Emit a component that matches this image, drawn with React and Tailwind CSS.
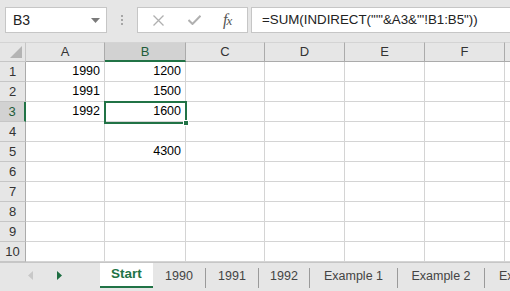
import React from 'react';

const cols = ["A", "B", "C", "D", "E", "F", "G"];
const data = {
  1: { A: "1990", B: "1200" },
  2: { A: "1991", B: "1500" },
  3: { A: "1992", B: "1600" },
  5: { B: "4300" },
};
const tabs = [
  { name: "1990", w: "w-[52px]" },
  { name: "1991", w: "w-[53px]" },
  { name: "1992", w: "w-[51px]" },
  { name: "Example 1", w: "w-[88px]" },
  { name: "Example 2", w: "w-[87px]" },
  { name: "Example 3", w: "w-[88px]" },
];

function FormulaBar() {
  return (
    <div className="h-[42px] bg-[#e6e6e6] flex items-start pt-[7px] pl-[5px] gap-0">
      <div className="w-[102px] h-[26px] shrink-0 bg-white border border-[#c6c6c6] flex items-center justify-between pl-[7px] pr-[6px]">
        <span className="text-[14px] text-[#222]">B3</span>
        <svg width="9" height="5" viewBox="0 0 9 5"><path d="M0 0 L9 0 L4.5 5 Z" fill="#7a7a7a" /></svg>
      </div>
      <div className="w-[30px] h-[26px] shrink-0 flex flex-col items-center justify-center gap-[2px]">
        <div className="w-[2px] h-[2px] bg-[#a6a6a6]" />
        <div className="w-[2px] h-[2px] bg-[#a6a6a6]" />
        <div className="w-[2px] h-[2px] bg-[#a6a6a6]" />
      </div>
      <div className="w-[111px] h-[26px] shrink-0 bg-white border border-[#c6c6c6] flex items-center">
        <svg className="ml-[15px]" width="11" height="11" viewBox="0 0 11 11"><path d="M0.5 0.5 L10.5 10.5 M10.5 0.5 L0.5 10.5" stroke="#b0b0b0" strokeWidth="1.3" /></svg>
        <svg className="ml-[24px]" width="13" height="10" viewBox="0 0 13 10"><path d="M0.5 5 L4.5 9 L12.5 0.8" stroke="#b0b0b0" strokeWidth="2" fill="none" /></svg>
        <span className="ml-[22px] text-[16px] italic text-[#555] font-['Liberation_Serif',serif] tracking-[-1px]">f<span className="text-[13px]">x</span></span>
      </div>
      <div className="ml-[3px] flex-1 min-w-0 h-[26px] bg-white border border-[#c6c6c6] border-r-0 flex items-center pl-[10px] overflow-hidden">
        <span className="text-[13.3px] text-[#222] whitespace-nowrap">=SUM(INDIRECT("'"&amp;A3&amp;"'!B1:B5"))</span>
      </div>
    </div>
  );
}

function Grid() {
  return (
    <div className="relative h-[220px] overflow-hidden bg-white">
      <div className="grid grid-cols-[26px_79px_81px_79px_80px_80px_80px_80px] auto-rows-[20px] w-[585px]">
        <div className="relative bg-[#e6e6e6] border-r border-b border-[#c6c6c6] border-t border-t-[#d4d4d4]">
          <svg className="absolute right-[3px] bottom-[3px]" width="12" height="12" viewBox="0 0 12 12"><path d="M12 0 L12 12 L0 12 Z" fill="#b4b4b4" /></svg>
        </div>
        {cols.map((c) =>
          c === "B" ? (
            <div key={c} className="bg-[#d2d2d2] border-r border-[#ababab] border-t border-t-[#d4d4d4] border-b-2 border-b-[#217346] flex items-center justify-center text-[13px] text-[#1f5c39]">{c}</div>
          ) : (
            <div key={c} className="bg-[#e6e6e6] border-r border-[#ababab] border-b border-b-[#ababab] border-t border-t-[#d4d4d4] flex items-center justify-center text-[13px] text-[#333]">{c === "G" ? "" : c}</div>
          )
        )}
        {[1, 2, 3, 4, 5, 6, 7, 8, 9, 10].map((r) => (
          <React.Fragment key={r}>
            {r === 3 ? (
              <div className="bg-[#d2d2d2] border-r-2 border-r-[#217346] border-b border-[#c6c6c6] flex items-center justify-center text-[13px] text-[#1f5c39]">{r}</div>
            ) : (
              <div className="bg-[#e6e6e6] border-r border-[#ababab] border-b border-b-[#c6c6c6] flex items-center justify-center text-[13px] text-[#333]">{r}</div>
            )}
            {cols.map((c) => (
              <div key={c} className="border-r border-b border-[#d4d4d4] flex items-center justify-end pr-[4px] text-[12.5px] text-black">
                {data[r] && data[r][c]}
              </div>
            ))}
          </React.Fragment>
        ))}
      </div>
      <div className="absolute left-[104px] top-[59px] w-[83px] h-[23px] border-2 border-[#217346]" />
      <div className="absolute left-[183px] top-[78px] w-[6px] h-[6px] bg-[#217346] border border-white" />
    </div>
  );
}

function SheetTabs() {
  return (
    <div className="h-[29px] bg-[#e6e6e6] border-t border-[#c6c6c6] flex items-start overflow-hidden">
      <div className="w-[100px] h-[25px] shrink-0 flex items-center">
        <svg className="ml-[28px]" width="5" height="9" viewBox="0 0 5 9"><path d="M5 0 L5 9 L0 4.5 Z" fill="#c8c8c8" /></svg>
        <svg className="ml-[24px]" width="5" height="9" viewBox="0 0 5 9"><path d="M0 0 L0 9 L5 4.5 Z" fill="#1e6e42" /></svg>
      </div>
      <div className="w-[53px] h-[25px] shrink-0 bg-white border-b-2 border-[#217346] flex items-center justify-center text-[13.5px] font-bold text-[#217346]">Start</div>
      {tabs.map((t, i) => (
        <div key={t.name} className={`${t.w} flex items-center h-[25px] shrink-0`}>
          {i > 0 && <div className="w-[1px] h-[20px] bg-[#9a9a9a] mt-[4px] shrink-0" />}
          <div className="flex-1 text-center text-[12.5px] text-[#444] whitespace-nowrap pt-[2px]">{t.name}</div>
        </div>
      ))}
    </div>
  );
}

export default function App() {
  return (
    <div className="w-[510px] h-[291px] overflow-hidden bg-[#e6e6e6] font-['Liberation_Sans',Arial,sans-serif]">
      <FormulaBar />
      <Grid />
      <SheetTabs />
    </div>
  );
}
